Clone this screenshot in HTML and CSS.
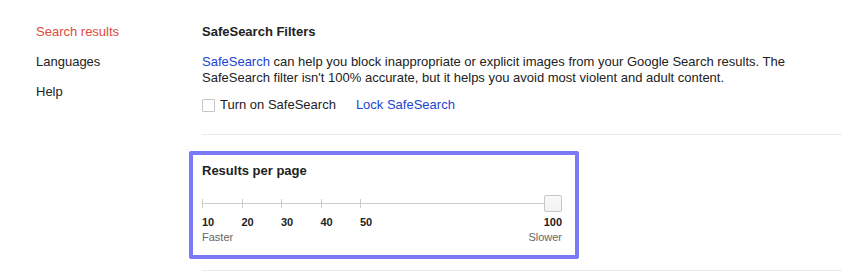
FILE: index.html
```html
<!DOCTYPE html>
<html lang="en">
<head>
    <meta charset="UTF-8">
    <title>Search Settings</title>
    <link rel="stylesheet" href="styles.css">
</head>
<body>
    <div class="page">
        <nav class="side-nav">
            <a class="nav-item active" href="#">Search results</a>
            <a class="nav-item" href="#">Languages</a>
            <a class="nav-item" href="#">Help</a>
        </nav>

        <main class="content">
            <div class="section">
                <h2>SafeSearch Filters</h2>
                <p><a href="#" class="link">SafeSearch</a> can help you block inappropriate or explicit images from your Google Search results. The SafeSearch filter isn't 100% accurate, but it helps you avoid most violent and adult content.</p>
                <div class="safe-row">
                    <label class="check-label"><span class="checkbox"></span>Turn on SafeSearch</label>
                    <a href="#" class="link">Lock SafeSearch</a>
                </div>
            </div>

            <div class="section highlight">
                <h2>Results per page</h2>
                <div class="slider">
                    <div class="track">
                        <span class="tick"></span>
                        <span class="tick"></span>
                        <span class="tick"></span>
                        <span class="tick"></span>
                        <span class="tick"></span>
                        <span class="thumb"></span>
                    </div>
                    <div class="labels">
                        <div class="label"><b>10</b><span>Faster</span></div>
                        <div class="label"><b>20</b></div>
                        <div class="label"><b>30</b></div>
                        <div class="label"><b>40</b></div>
                        <div class="label"><b>50</b></div>
                        <div class="label end"><b>100</b><span>Slower</span></div>
                    </div>
                </div>
            </div>
            <div class="rule"></div>
        </main>
    </div>
</body>
</html>
```

FILE: styles.css
```css
* {
    margin: 0;
    padding: 0;
    box-sizing: border-box;
}

body {
    font-family: "Liberation Sans", Arial, sans-serif;
    font-size: 13px;
    line-height: 16px;
    color: #222;
    background: #fff;
}

.page {
    display: flex;
    padding-top: 24px;
}

.side-nav {
    width: 202px;
    padding-left: 36px;
    display: flex;
    flex-direction: column;
    gap: 14px;
}

.nav-item {
    color: #222;
    text-decoration: none;
}

.nav-item.active {
    color: #dd4b39;
}

.content {
    width: 640px;
}

.section {
    padding-bottom: 21px;
    border-bottom: 1px solid #ebebeb;
}

h2 {
    font-size: 13px;
    font-weight: bold;
    margin-bottom: 14px;
}

p {
    margin-bottom: 11px;
}

.link {
    color: #1a44d4;
    text-decoration: none;
}

.safe-row {
    display: flex;
    align-items: center;
    gap: 20px;
}

.check-label {
    display: flex;
    align-items: center;
    gap: 5px;
}

.checkbox {
    width: 13px;
    height: 13px;
    border: 1px solid #c6c6c6;
    border-radius: 1px;
    background: #fff;
}

.highlight {
    width: 390px;
    margin: 16px 0 0 -13px;
    padding: 8px 13px 11px 9px;
    border: 4px solid #7b79f6;
    border-radius: 2px;
}

.highlight h2 {
    margin-bottom: 20px;
}

.slider {
    width: 360px;
}

.track {
    position: relative;
    display: flex;
    height: 9px;
    margin-right: 9px;
    background: linear-gradient(#ccc, #ccc) 0 4px / 100% 1px no-repeat;
}

.tick {
    width: 39.5px;
    border-left: 1px solid #ccc;
}

.thumb {
    position: absolute;
    right: -9px;
    top: -4px;
    width: 18px;
    height: 17px;
    border: 1px solid #c6c6c6;
    border-radius: 2px;
    background: linear-gradient(#f9f9f9, #f1f1f1);
}

.labels {
    display: flex;
    margin-top: 7px;
    font-size: 11px;
    line-height: 14px;
}

.label {
    width: 39.5px;
    display: flex;
    flex-direction: column;
}

.label b {
    color: #222;
    font-weight: bold;
}

.label span {
    color: #666;
    white-space: nowrap;
    margin-top: 1px;
}

.label.end {
    flex: 1;
    align-items: flex-end;
}

.rule {
    margin-top: 11px;
    border-bottom: 1px solid #ebebeb;
}
```
